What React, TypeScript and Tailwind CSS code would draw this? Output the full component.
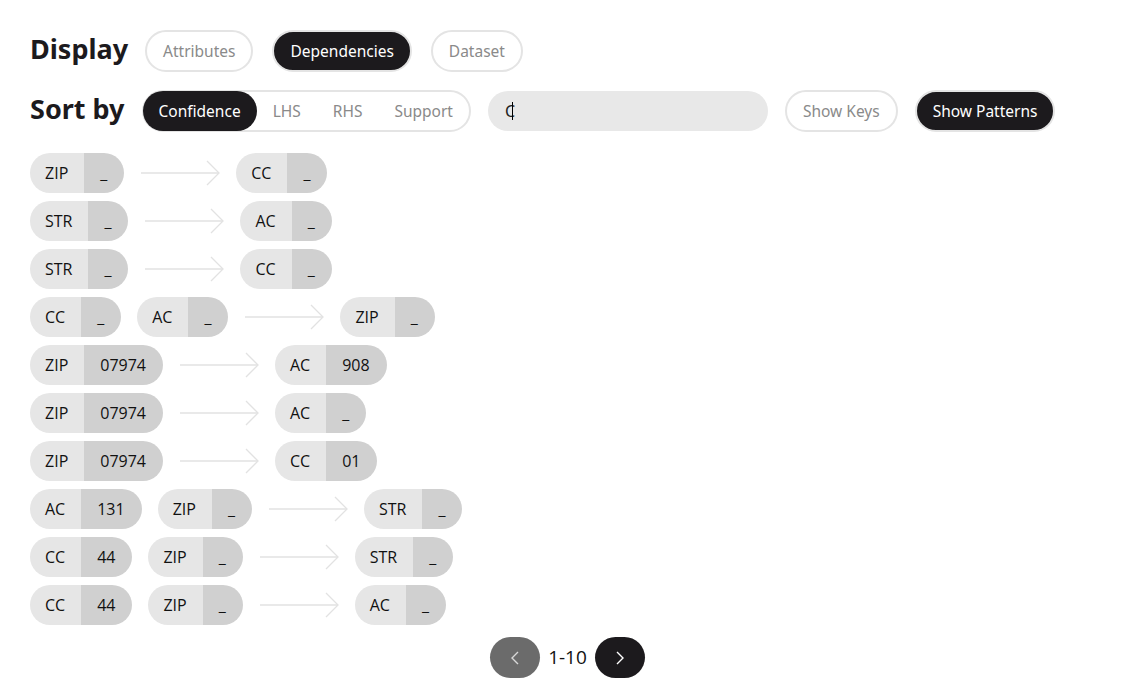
import React from 'react';

type Cell = { attr: string; value: string };
type Dep = { lhs: Cell[]; rhs: Cell };

const deps: Dep[] = [
  { lhs: [{ attr: 'ZIP', value: '_' }], rhs: { attr: 'CC', value: '_' } },
  { lhs: [{ attr: 'STR', value: '_' }], rhs: { attr: 'AC', value: '_' } },
  { lhs: [{ attr: 'STR', value: '_' }], rhs: { attr: 'CC', value: '_' } },
  { lhs: [{ attr: 'CC', value: '_' }, { attr: 'AC', value: '_' }], rhs: { attr: 'ZIP', value: '_' } },
  { lhs: [{ attr: 'ZIP', value: '07974' }], rhs: { attr: 'AC', value: '908' } },
  { lhs: [{ attr: 'ZIP', value: '07974' }], rhs: { attr: 'AC', value: '_' } },
  { lhs: [{ attr: 'ZIP', value: '07974' }], rhs: { attr: 'CC', value: '01' } },
  { lhs: [{ attr: 'AC', value: '131' }, { attr: 'ZIP', value: '_' }], rhs: { attr: 'STR', value: '_' } },
  { lhs: [{ attr: 'CC', value: '44' }, { attr: 'ZIP', value: '_' }], rhs: { attr: 'STR', value: '_' } },
  { lhs: [{ attr: 'CC', value: '44' }, { attr: 'ZIP', value: '_' }], rhs: { attr: 'AC', value: '_' } },
];

const Pill: React.FC<{ cell: Cell }> = ({ cell }) => (
  <div className="flex h-10 overflow-hidden rounded-full text-[16px] text-[#111]">
    <div className="flex items-center bg-[#e6e6e6] pl-[15px] pr-[16px]">{cell.attr}</div>
    <div className="flex items-center bg-[#d0d0d0] pl-[16px] pr-[17px]">{cell.value}</div>
  </div>
);

const Arrow = () => (
  <svg width="80" height="28" viewBox="0 0 80 28" className="mx-[16px]" fill="none">
    <line x1="1" y1="14" x2="79" y2="14" stroke="#e2e2e2" strokeWidth="1.3" />
    <polyline points="67,2 79,14 67,26" stroke="#e2e2e2" strokeWidth="1.3" />
  </svg>
);

const OutlineBtn: React.FC<{ children: React.ReactNode }> = ({ children }) => (
  <button className="h-[42px] rounded-full border-2 border-[#e4e4e4] bg-white px-[16px] pt-px text-[15.5px] text-[#8a8a8a]">
    {children}
  </button>
);

const DarkBtn: React.FC<{ children: React.ReactNode }> = ({ children }) => (
  <button className="h-[42px] rounded-full border-2 border-[#e4e4e4] bg-[#1c1a1d] px-[16px] pt-px text-[15.5px] text-white">
    {children}
  </button>
);

export default function App() {
  return (
    <div className="min-h-screen bg-white px-[30px] pt-[30px]" style={{ fontFamily: '"Noto Sans", "Open Sans", sans-serif' }}>
      <div className="flex items-center gap-[17px]">
        <h2 className="-mt-[5px] text-[27px] font-bold leading-none text-[#1c1a1d]">Display</h2>
        <div className="flex gap-[19px]">
          <OutlineBtn>Attributes</OutlineBtn>
          <DarkBtn>Dependencies</DarkBtn>
          <OutlineBtn>Dataset</OutlineBtn>
        </div>
      </div>

      <div className="mt-[18px] flex items-center gap-[17px]">
        <h2 className="-mt-[5px] text-[27px] font-bold leading-none text-[#1c1a1d]">Sort by</h2>
        <div className="flex h-[42px] items-center rounded-full border-2 border-[#e4e4e4]">
          <button className="-ml-[1px] h-[40px] rounded-full bg-[#1c1a1d] px-[16px] pt-px text-[15.5px] text-white">Confidence</button>
          <button className="h-[38px] px-[16px] pt-px text-[15.5px] text-[#8a8a8a]">LHS</button>
          <button className="h-[38px] px-[16px] pt-px text-[15.5px] text-[#8a8a8a]">RHS</button>
          <button className="h-[38px] px-[16px] pt-px text-[15.5px] text-[#8a8a8a]">Support</button>
        </div>
        <div className="flex h-10 w-[280px] items-center rounded-full bg-[#e8e8e8] px-[17px] text-[16px] text-[#222]">
          <span>C</span>
          <span className="-ml-[3px] h-[18px] w-px bg-black" />
        </div>
        <OutlineBtn>Show Keys</OutlineBtn>
        <DarkBtn>Show Patterns</DarkBtn>
      </div>

      <div className="mt-[21px] flex flex-col gap-2" style={{ fontFamily: '"Open Sans", "Noto Sans", sans-serif' }}>
        {deps.map((d, i) => (
          <div key={i} className="flex items-center">
            <div className="flex gap-[16px]">
              {d.lhs.map((c, j) => (
                <Pill key={j} cell={c} />
              ))}
            </div>
            <Arrow />
            <Pill cell={d.rhs} />
          </div>
        ))}
      </div>

      <div className="mt-[12px] flex items-center justify-center gap-2 pl-[7px]">
        <button className="flex h-[41px] w-[50px] items-center justify-center rounded-full bg-[#6b6b6b]">
          <svg width="10" height="16" viewBox="0 0 10 16" fill="none">
            <polyline points="8,2 2,8 8,14" stroke="#d8d8d8" strokeWidth="1.4" />
          </svg>
        </button>
        <span className="text-[19px] text-[#111]" style={{ fontFamily: '"Open Sans", sans-serif' }}>1-10</span>
        <button className="flex h-[41px] w-[50px] items-center justify-center rounded-full bg-[#1c1a1d]">
          <svg width="10" height="16" viewBox="0 0 10 16" fill="none">
            <polyline points="2,2 8,8 2,14" stroke="#ffffff" strokeWidth="1.4" />
          </svg>
        </button>
      </div>
    </div>
  );
}
